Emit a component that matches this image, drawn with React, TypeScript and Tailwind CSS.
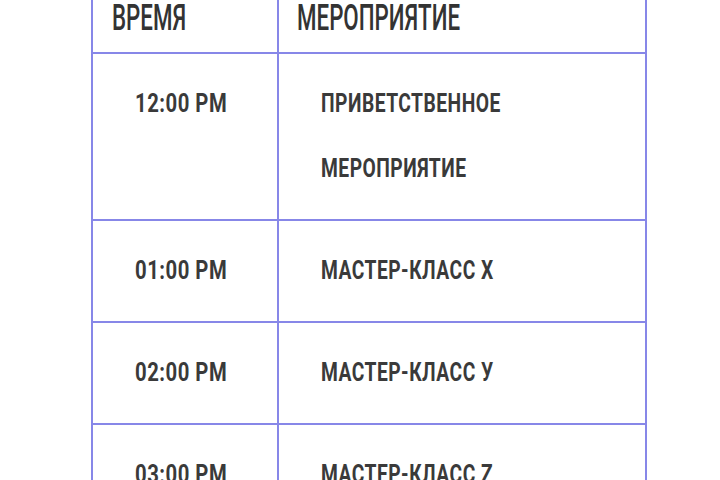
export default function App() {
  const rows = [
    { time: "12:00 PM", event: ["ПРИВЕТСТВЕННОЕ", "МЕРОПРИЯТИЕ"] },
    { time: "01:00 PM", event: ["МАСТЕР-КЛАСС X"] },
    { time: "02:00 PM", event: ["МАСТЕР-КЛАСС У"] },
    { time: "03:00 PM", event: ["МАСТЕР-КЛАСС Z"] },
  ];

  return (
    <div className="w-[720px] h-[480px] overflow-hidden bg-white font-['Roboto',sans-serif]">
      <table className="ml-[91px] -mt-[30px] w-[556px] border-collapse table-fixed">
        <colgroup>
          <col className="w-[186px]" />
          <col />
        </colgroup>
        <thead>
          <tr>
            <th className="h-[82px] border-2 border-[#8787e8] pl-[19px] pb-[15px] text-left align-bottom font-normal">
              <span className="inline-block origin-left scale-x-[0.62] text-[36px] leading-none font-medium text-[#333]">
                ВРЕМЯ
              </span>
            </th>
            <th className="border-2 border-[#8787e8] pl-[18px] pb-[15px] text-left align-bottom font-normal">
              <span className="inline-block origin-left scale-x-[0.62] text-[36px] leading-none font-medium text-[#333]">
                МЕРОПРИЯТИЕ
              </span>
            </th>
          </tr>
        </thead>
        <tbody>
          {rows.map((row) => (
            <tr key={row.time}>
              <td className="border-2 border-[#8787e8] pl-[42px] pt-[17px] pb-[18px] align-top">
                <span className="block origin-left scale-x-[0.78] text-[26px] leading-[65px] font-bold tracking-wide text-[#3a3a3a]">
                  {row.time}
                </span>
              </td>
              <td className="border-2 border-[#8787e8] pl-[42px] pt-[17px] pb-[18px] align-top">
                {row.event.map((line) => (
                  <span
                    key={line}
                    className="block origin-left scale-x-[0.74] text-[26px] leading-[65px] font-bold tracking-wide text-[#3a3a3a]"
                  >
                    {line}
                  </span>
                ))}
              </td>
            </tr>
          ))}
        </tbody>
      </table>
    </div>
  );
}
